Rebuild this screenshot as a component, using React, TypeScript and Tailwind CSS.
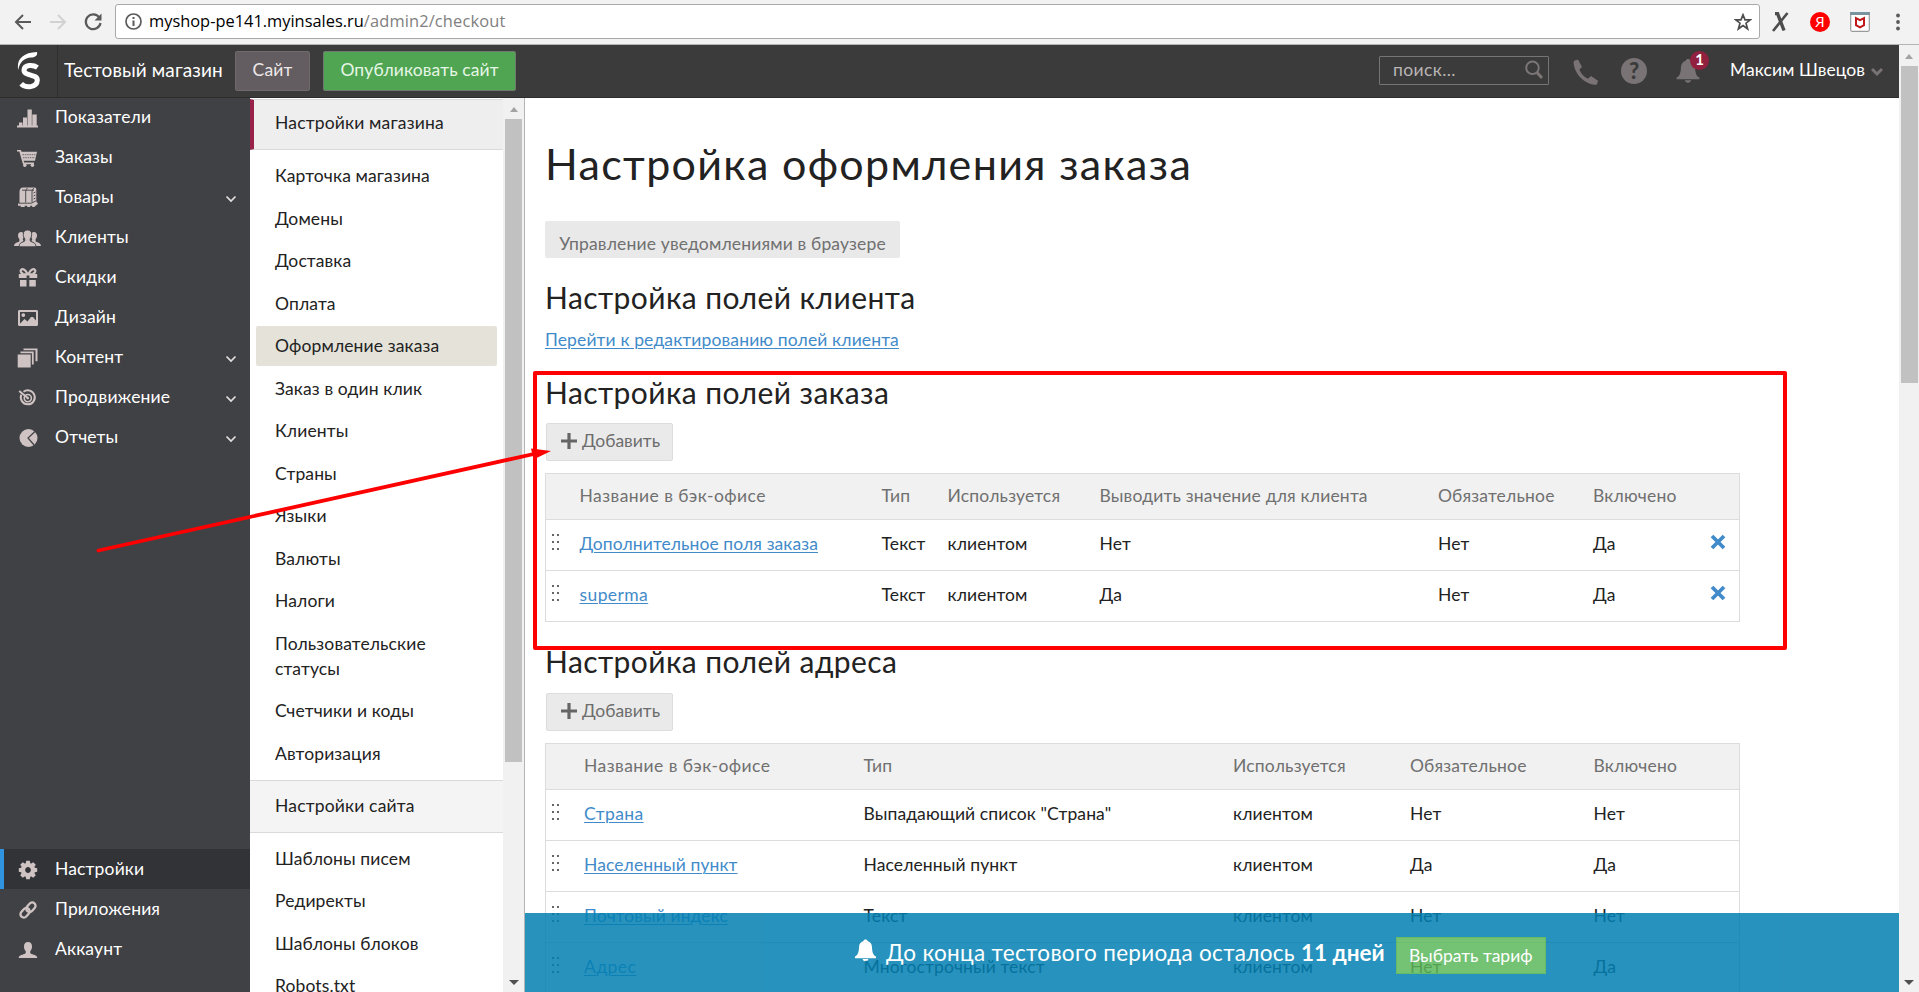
import type { ReactNode } from 'react';
import clsx from 'clsx';

const iconColor = '#cfc3c3';

function Ico({ children }: { children: ReactNode }) {
  return (
    <svg className="block h-[24px] w-[28px] shrink-0" viewBox="0 0 28 24" fill={iconColor} stroke="none">
      {children}
    </svg>
  );
}

const icons: Record<string, ReactNode> = {
  stats: (
    <Ico>
      <path d="M3 19.500h21v2H3zM5 16.500h3.500v3H5zM9 11.500h4v8H9zM13.500 3.500h4.300v16h-4.300zM18.300 8.500h4.400v11h-4.400z" />
    </Ico>
  ),
  cart: (
    <Ico>
      <path d="M3 4h3.800l.8 1.800H23l-2 9H9.600l.6 1.700H20v1.700H9L5.300 5.600H3z" />
      <circle cx="10.800" cy="19.300" r="1.700" />
      <circle cx="18.400" cy="19.300" r="1.700" />
      <path d="M8.500 8.700h13M9 11.700h12" stroke="#404145" strokeWidth=".7" strokeDasharray="1.500 .8" />
    </Ico>
  ),
  goods: (
    <Ico>
      <path d="M9 1.500h11.500c1.500 0 1.800.8 1.800 2.500v11.500l1.700 2.200-3.800 3.300h-2v-1.200h-2V21h-3v-1.200h-2.500V21h-4v-1.200H4V17.500h1.500V6C5.500 3.500 6.500 1.500 9 1.500z" />
      <path d="M13.500 2c-1.500 1.300-1.800 2.500-1.800 4v10.500M20 2c-1.500 1.300-2 2.500-2 4v10.500M5 17.200h12.500l4.500-2.400M19.500 7l2-1M19.500 10l2-1M19.500 13l2-1M8 4.200h12" stroke="#404145" strokeWidth=".9" fill="none" />
    </Ico>
  ),
  clients: (
    <Ico>
      <path d="M7 6c1.900 0 3 1.300 3 3.400 0 1.500-.5 2.500-1.200 3.300 0 1.500.5 2 .9 2.200L6 18.500 5.500 20H0c.2-2.500 1.500-3 5-4.300.5-.3.500-1.500.3-3C4.500 12 4 11 4 9.400 4 7.300 5.200 6 7 6z" />
      <path d="M20 6c-1.900 0-3 1.300-3 3.400 0 1.500.5 2.500 1.200 3.300 0 1.500-.5 2-.9 2.200l3.700 3.600.5 1.500H27c-.2-2.500-1.500-3-5-4.300-.5-.3-.5-1.500-.3-3 .8-.7 1.300-1.700 1.300-3.300C23 7.300 21.800 6 20 6z" />
      <path d="M13.500 4c2.700 0 4.200 1.700 4.200 4.300 0 2-.6 3.500-1.500 4.500-.1 1.500 0 2.300.6 2.600 3.700 1.400 5 2 5.200 5.400H5c.2-3.400 1.500-4 5.200-5.400.6-.3.700-1.100.6-2.600-.9-1-1.500-2.500-1.500-4.500C9.300 5.700 10.800 4 13.500 4z" stroke="#404145" strokeWidth=".9" />
    </Ico>
  ),
  gift: (
    <Ico>
      <path d="M4.800 8h4l1.200-.8h8l1.200.8h4v4h-7.800V9.500h-2.800V12H4.800zM6 14h6.500v6.500H6zM15.300 14h6.500v6.500h-6.500z" />
      <path d="M13.500 8C11 3 8.500 2.500 7 4c-1 1.200 0 3.200 2.500 4M14.500 8C17 3 19.500 2.500 21 4c1 1.200 0 3.200-2.500 4" fill="none" stroke={iconColor} strokeWidth="2.200" />
    </Ico>
  ),
  image: (
    <Ico>
      <path fillRule="evenodd" d="M5.500 4h17c.9 0 1.500.6 1.500 1.500v13c0 .9-.6 1.500-1.500 1.500h-17c-.9 0-1.500-.6-1.500-1.500v-13C4 4.600 4.600 4 5.500 4zM6 6v11.700l4.500-4.700 3 2.500 3.500-4.500 2 .1 3 3.400V6z" />
      <circle cx="9.300" cy="9.100" r="1.900" />
    </Ico>
  ),
  layers: (
    <Ico>
      <path d="M3.700 8.500h13v13h-13zM6.500 5.500h13.200v13h-1.800V7.200H6.500zM9.500 2.500H23.500v12.800h-2V4.200h-12z" />
    </Ico>
  ),
  target: (
    <Ico>
      <g fill="none" stroke={iconColor}>
        <path d="M9.500 5.800A7 7 0 1 1 7.300 8.700" strokeWidth="2" />
        <circle cx="13.800" cy="12.100" r="3.600" strokeWidth="1.600" />
        <path d="M5.200 4.900l8.600 7.200" strokeWidth="2" />
      </g>
      <circle cx="13.800" cy="12.100" r="1.300" />
    </Ico>
  ),
  pie: (
    <Ico>
      <circle cx="14.500" cy="12" r="9" />
      <path d="M21.500 5l-7.500 7 6.500 7.500" fill="none" stroke="#404145" strokeWidth="1.200" />
    </Ico>
  ),
  gear: (
    <Ico>
      <g transform="translate(14 12)">
        <circle r="5" fill="none" stroke={iconColor} strokeWidth="4.200" />
        {[0, 45, 90, 135].map((a) => (
          <path key={a} transform={`rotate(${a})`} d="M-1.800-9.200h3.600l.6 3.200h-4.800zM-1.800 9.200h3.600L2.400 6h-4.800z" />
        ))}
      </g>
    </Ico>
  ),
  link: (
    <Ico>
      <g fill="none" stroke={iconColor} strokeWidth="2.300" transform="translate(14 12) rotate(-48)">
        <rect x="-9.300" y="-3.600" width="10.600" height="6.600" rx="3.300" />
        <rect x="-1.300" y="-3" width="10.600" height="6.600" rx="3.300" />
      </g>
    </Ico>
  ),
  user: (
    <Ico>
      <path d="M14 4c2.700 0 4 1.600 4 4.400 0 2.200-.7 3.700-1.700 4.700-.2 1.600 0 2.400.7 2.700 4.300 1.400 6 1.700 6.300 4.200H4.700c.3-2.500 2-2.800 6.300-4.200.7-.3.900-1.100.7-2.700-1-1-1.700-2.500-1.700-4.700C10 5.600 11.300 4 14 4z" />
    </Ico>
  ),
};

const BellPath = () => (
  <path d="M12 1c1.200 0 2 .6 2.200 1.700 3 .9 4.500 3.200 4.600 6.600.1 4.600 1.200 8.200 4.200 9.500v1.700H1v-1.700c3-1.300 4.100-4.900 4.200-9.500.1-3.400 1.600-5.700 4.600-6.600C10 1.600 10.800 1 12 1zM9 21.500h6c-.3 1.500-1.400 2.300-3 2.300s-2.700-.8-3-2.300z" />
);

type NavRow = { icon: string; label: string; open?: boolean; active?: boolean };

const topNav: NavRow[] = [
  { icon: 'stats', label: 'Показатели' },
  { icon: 'cart', label: 'Заказы' },
  { icon: 'goods', label: 'Товары', open: true },
  { icon: 'clients', label: 'Клиенты' },
  { icon: 'gift', label: 'Скидки' },
  { icon: 'image', label: 'Дизайн' },
  { icon: 'layers', label: 'Контент', open: true },
  { icon: 'target', label: 'Продвижение', open: true },
  { icon: 'pie', label: 'Отчеты', open: true },
];
const bottomNav: NavRow[] = [
  { icon: 'gear', label: 'Настройки', active: true },
  { icon: 'link', label: 'Приложения' },
  { icon: 'user', label: 'Аккаунт' },
];

function NavItem({ icon, label, open, active }: NavRow) {
  return (
    <li
      className={clsx(
        'flex h-10 items-center border-l-4 pr-[13px] pl-[10px]',
        active ? 'border-[#2f93df] bg-[#323337]' : 'border-transparent',
      )}
    >
      <span className="mt-0.5">{icons[icon]}</span>
      <span className="ml-[13px] flex-1 text-[17.5px] leading-10 tracking-[0.15px] text-white">{label}</span>
      {open && (
        <svg className="mt-1 h-2.5 w-3" viewBox="0 0 12 10" fill="none" stroke="#e4e0e0" strokeWidth="1.700">
          <path d="M1.500 2.500L6 7l4.500-4.500" />
        </svg>
      )}
    </li>
  );
}

const shopMenu = ['Карточка магазина', 'Домены', 'Доставка', 'Оплата', 'Оформление заказа', 'Заказ в один клик', 'Клиенты', 'Страны', 'Языки', 'Валюты', 'Налоги', 'Пользовательские статусы', 'Счетчики и коды', 'Авторизация'];
const siteMenu = ['Шаблоны писем', 'Редиректы', 'Шаблоны блоков', 'Robots.txt'];

function SubMenu({ items }: { items: string[] }) {
  return (
    <ul className="flex flex-col gap-[2.5px] px-1.5">
      {items.map((t) => (
        <li
          key={t}
          className={clsx(
            'rounded-[2px] pt-[7px] pr-10 pb-2 pl-[19px] text-[17.5px] leading-[25px] tracking-[0.12px]',
            t === 'Оформление заказа' && 'bg-[#e4e2d9]',
          )}
        >
          {t}
        </li>
      ))}
    </ul>
  );
}

function H2({ children }: { children: ReactNode }) {
  return <h2 className="text-[30px] leading-9 tracking-[0.42px]">{children}</h2>;
}

function AddButton() {
  return (
    <button className="ml-px flex h-[38px] w-[127px] items-start rounded-[2px] border border-[#dcdcdc] bg-[#eaeaea] pl-[14px] text-[17.5px] leading-[34px] text-[#6d6d6d]">
      <svg className="mt-[9px] mr-[5px] h-4 w-4" viewBox="0 0 16 16" fill="#666">
        <path d="M6.400 0h3.200v6.400H16v3H9.600V16H6.400V9.400H0v-3h6.400z" />
      </svg>
      Добавить
    </button>
  );
}

function Handle() {
  return (
    <svg className="mt-[13px] ml-[6px] h-[17px] w-2" viewBox="0 0 8 17" fill="#666">
      {[1, 8, 15].map((y) => (
        <path key={y} d={`M0 ${y}h2v2H0zM5 ${y}h2v2H5z`} />
      ))}
    </svg>
  );
}

const Cross = () => (
  <svg className="mt-[14px] -ml-px h-4 w-4" viewBox="0 0 16 16" fill="none" stroke="#428bca" strokeWidth="3.800">
    <path d="M2 2l12 12M14 2L2 14" />
  </svg>
);

function Table({ cols, head, rows, removable }: { cols: string; head: string[]; rows: string[][]; removable?: boolean }) {
  return (
    <div className="mt-3 w-[1195px] border-x border-t border-[#dcdcdc]">
      <div className={clsx('grid h-[46px] border-b border-[#dcdcdc] bg-[#f1f1f1] text-[17.5px] leading-[43px] text-[#707070]', cols)}>
        <span />
        {head.map((h, i) => (
          <span key={h} className={i === 0 ? 'tracking-[0.45px]' : 'tracking-[0.18px]'}>
            {h}
          </span>
        ))}
      </div>
      {rows.map((r) => (
        <div key={r[0]} className={clsx('grid h-[51px] border-b border-[#dcdcdc] text-[17.5px] leading-[48px]', cols)}>
          <Handle />
          {r.map((c, i) =>
            i === 0 ? (
              <a key={i} className={clsx('text-[#428bca] underline decoration-1 underline-offset-[2px]', c.length < 8 ? 'tracking-[0.4px]' : 'tracking-[0.08px]')}>
                {c}
              </a>
            ) : (
              <span key={i} className="tracking-[0.1px]">
                {c}
              </span>
            ),
          )}
          {removable && <Cross />}
        </div>
      ))}
    </div>
  );
}

const Up = () => <span className="h-0 w-0 border-x-[4px] border-b-[5px] border-x-transparent border-b-[#a3a3a3]" />;
const Down = () => <span className="h-0 w-0 border-x-[5px] border-t-[5px] border-x-transparent border-t-[#505050]" />;

function BrowserBar() {
  return (
    <div className="flex h-[45px] shrink-0 items-start border-b border-[#b4b4b4] bg-[#f2f2f2]">
      <div className="flex h-11 w-[115px] shrink-0 items-center pl-[14px]">
        <svg className="h-5 w-[18px]" viewBox="0 0 18 20" fill="none" stroke="#5a5a5a" strokeWidth="2">
          <path d="M17 10H2.500M9 3L2 10l7 7" />
        </svg>
        <svg className="ml-[17px] h-5 w-[18px]" viewBox="0 0 18 20" fill="none" stroke="#d2d2d2" strokeWidth="2">
          <path d="M1 10h14.500M9 3l7 7-7 7" />
        </svg>
        <svg className="ml-[17px] h-5 w-[18px]" viewBox="0 0 18 20" fill="none" stroke="#5a5a5a" strokeWidth="2.200">
          <path d="M15.300 5.500A7.400 7.400 0 1 0 16.500 11" />
          <path d="M17.500 1.500v7h-7z" fill="#5a5a5a" stroke="none" />
        </svg>
      </div>
      <div className="mt-1 flex h-[35px] w-[1645px] items-center rounded-[3px] border border-[#a9a9a9] bg-white pr-[7px] pl-[9px] font-['Open_Sans',sans-serif] text-[16.4px]">
        <svg className="h-[17px] w-[17px]" viewBox="0 0 17 17" fill="none" stroke="#5a5a5a">
          <circle cx="8.500" cy="8.500" r="7.500" strokeWidth="1.700" />
          <path d="M8.500 7.500V13M8.500 4v2" strokeWidth="2" />
        </svg>
        <span className="ml-[7px] text-black">myshop-pe141.myinsales.ru</span>
        <span className="flex-1 tracking-[0.15px] text-[#808080]">/admin2/checkout</span>
        <svg className="h-[18px] w-[18px]" viewBox="0 0 18 18" fill="none" stroke="#4d4d4d" strokeWidth="1.700">
          <path d="M9 1.800l2 5h5.200l-4.200 3.400 1.600 5.600L9 12.500l-4.600 3.300L6 10.200 1.800 6.800H7z" />
        </svg>
      </div>
      <div className="flex h-11 flex-1 items-center pl-[11px]">
        <svg className="h-5 w-[18px]" viewBox="0 0 18 20" fill="none" stroke="#4c4c4c">
          <path d="M4 1.500h2.500L13 18.500" strokeWidth="3.400" />
          <path d="M16.500 1L2 19" strokeWidth="2.600" />
        </svg>
        <span className="ml-[21px] flex h-5 w-5 items-center justify-center rounded-full bg-[#f00] text-[14px] leading-5 text-white">Я</span>
        <svg className="ml-5 h-5 w-5" viewBox="0 0 20 20">
          <rect x=".7" y=".7" width="18.600" height="18.600" rx="1.500" fill="#fff" stroke="#999" strokeWidth="1.200" />
          <path d="M0 0h20v3H0z" fill="#7a949f" />
          <path d="M6 6.200l4 2 4-2v7L10 15.300 6 13.200z" fill="none" stroke="#c01818" strokeWidth="2" />
        </svg>
        <svg className="ml-[26px] h-[18px] w-1" viewBox="0 0 4 18" fill="#5a5a5a">
          <circle cx="2" cy="2.500" r="1.900" />
          <circle cx="2" cy="9" r="1.900" />
          <circle cx="2" cy="15.500" r="1.900" />
        </svg>
      </div>
    </div>
  );
}

function Header() {
  return (
    <header className="flex h-[53px] shrink-0 items-start border-b border-[#2c2c2c] bg-[#3b3b3b] text-[17.5px]">
      <div className="h-[52px] w-[58px] shrink-0 border-r border-[#2f2f2f] pt-[7px] pl-[17px]">
        <svg className="h-[38px] w-6" viewBox="0 0 24 38">
          <path d="M1.200 18C-.6 8 5 .6 20 0c.8 3.500-1.500 5.300-6 5.600C7.500 6.200 2.800 9.500 1.200 18z" fill="#fff" />
          <path d="M20.500 15.500C16 12.500 7.500 12.500 7 18c-.4 6.500 13.600 3.600 13.300 10.200C20 36 8.500 36.300 4.200 31.800" fill="none" stroke="#fff" strokeWidth="5" />
        </svg>
      </div>
      <span className="w-[177px] pl-1.5 text-[19px] leading-[50px] tracking-[0.1px] text-white">Тестовый магазин</span>
      <button className="mt-1.5 h-10 w-[75px] rounded-[2px] border border-[#6f696b] bg-[#635c60] pb-[3px] leading-[34px] tracking-[0.15px] text-[#ece8e8]">Сайт</button>
      <button className="mt-1.5 ml-[13px] h-10 w-[193px] rounded-[2px] border border-[#6f7a6f] bg-[#4fa551] pb-[3px] leading-[34px] tracking-[0.1px] text-[#e6f6e6]">Опубликовать сайт</button>
      <span className="flex-1" />
      <div className="mt-[11px] flex h-[29px] w-[170px] rounded-[1px] border border-[#757575] pl-[13px] text-[#b9b4b4]">
        <span className="flex-1 leading-[26px] tracking-[0.4px]">поиск...</span>
        <svg className="mt-[3px] mr-1 h-5 w-5" viewBox="0 0 20 20" fill="none" stroke="#7c7676">
          <circle cx="8.500" cy="7.800" r="6.300" strokeWidth="2" />
          <path d="M13 12.500l5 5.500" strokeWidth="3" />
        </svg>
      </div>
      <svg className="mt-3.5 ml-6 h-[26px] w-[26px]" viewBox="0 0 26 26" fill="#7a7375">
        <path d="M1.200 1.800L5 .5l4 7.500-2.600 2.400c1.400 4.200 4.600 7.400 8.600 9.400l3-2.700 7 4.600-1 3.500c-1 .8-4 .6-6.500-.2C8.500 22 1.500 13 .7 5 .6 3.500.7 2.500 1.200 1.800z" />
      </svg>
      <span className="mt-[13px] ml-[22px] flex h-[26px] w-[26px] items-center justify-center rounded-full bg-[#7a7375] text-[22px] leading-[26px] font-black text-[#3b3b3b]">?</span>
      <span className="relative mt-[13px] ml-[28px]">
        <svg className="h-[26px] w-[26px]" viewBox="0 0 24 25" fill="#7a7375">
          <BellPath />
        </svg>
        <span className="absolute -top-[7px] left-[15px] flex h-[19px] w-[19px] items-start justify-center rounded-full bg-[#92203f] text-[15px] leading-[17px] font-bold text-white">1</span>
      </span>
      <span className="ml-[29px] leading-[50px] tracking-[0.05px] whitespace-nowrap text-white">Максим Швецов</span>
      <svg className="mt-[22px] mr-4 ml-1.5 h-2.5 w-3" viewBox="0 0 12 10" fill="none" stroke="#7a7375" strokeWidth="3">
        <path d="M1 2l5 5 5-5" />
      </svg>
    </header>
  );
}

export default function App() {
  return (
    <div className="relative flex h-[992px] w-[1919px] flex-col overflow-hidden bg-white font-['Lato','Open_Sans',sans-serif] text-[#222]">
      <BrowserBar />
      <div className="flex min-h-0 flex-1">
        <div className="flex min-w-0 flex-1 flex-col">
          <Header />
          <div className="flex min-h-0 flex-1">
            <nav className="flex w-[250px] shrink-0 flex-col justify-between bg-[#404145] pb-[23px]">
              <ul className="-mt-px">
                {topNav.map((n) => (
                  <NavItem key={n.label} {...n} />
                ))}
              </ul>
              <ul>
                {bottomNav.map((n) => (
                  <NavItem key={n.label} {...n} />
                ))}
              </ul>
            </nav>

            <aside className="flex w-[275px] shrink-0 overflow-hidden border-r border-[#b5b5b5]">
              <div className="w-[253px] shrink-0 pt-px">
                <div className="mb-1.5 h-[51px] border-y border-l-4 border-y-[#dadada] border-l-[#98224a] bg-[#eeeeee] pl-[21px] text-[17.5px] leading-[46px] tracking-[0.17px]">Настройки магазина</div>
                <SubMenu items={shopMenu} />
                <div className="mt-[6px] mb-1.5 h-[53px] border-y border-[#dadada] bg-[#f4f4f4] pl-[25px] text-[17.5px] leading-[50px] tracking-[0.17px]">Настройки сайта</div>
                <SubMenu items={siteMenu} />
              </div>
              <div className="flex flex-1 flex-col items-center justify-between bg-[#f1f1f1] pt-[9px] pb-[7px]">
                <div className="flex flex-col items-center">
                  <Up />
                  <div className="mt-[7px] h-[643px] w-[17px] bg-[#c1c1c1]" />
                </div>
                <Down />
              </div>
            </aside>

            <main className="relative min-w-0 flex-1 overflow-hidden pt-[41px] pl-5">
              <h1 className="text-[43px] leading-[50px] tracking-[1.33px]">Настройка оформления заказа</h1>
              <div className="mt-8 h-[37px] w-[355px] rounded-[2px] bg-[#e9e9e9] pt-2 text-center text-[17.5px] leading-[30px] tracking-[0.15px] text-[#707070]">
                Управление уведомлениями в браузере
              </div>
              <div className="mt-[21px]">
                <H2>Настройка полей клиента</H2>
              </div>
              <div className="mt-3 text-[17.5px] leading-[26px] tracking-[0.13px]">
                <a className="text-[#428bca] underline decoration-1 underline-offset-[2px]">Перейти к редактированию полей клиента</a>
              </div>
              <div className="mt-[21px] mb-[13px]">
                <H2>Настройка полей заказа</H2>
              </div>
              <AddButton />
              <Table
                cols="grid-cols-[33.5px_302px_66px_152px_338.5px_155px_118px_1fr]"
                head={['Название в бэк-офисе', 'Тип', 'Используется', 'Выводить значение для клиента', 'Обязательное', 'Включено']}
                rows={[
                  ['Дополнительное поля заказа', 'Текст', 'клиентом', 'Нет', 'Нет', 'Да'],
                  ['superma', 'Текст', 'клиентом', 'Да', 'Нет', 'Да'],
                ]}
                removable
              />
              <div className="mt-[21px] mb-3.5">
                <H2>Настройка полей адреса</H2>
              </div>
              <AddButton />
              <Table
                cols="grid-cols-[38px_279.5px_369.5px_177px_183.5px_1fr]"
                head={['Название в бэк-офисе', 'Тип', 'Используется', 'Обязательное', 'Включено']}
                rows={[
                  ['Страна', 'Выпадающий список "Страна"', 'клиентом', 'Нет', 'Нет'],
                  ['Населенный пункт', 'Населенный пункт', 'клиентом', 'Да', 'Да'],
                  ['Почтовый индекс', 'Текст', 'клиентом', 'Нет', 'Нет'],
                  ['Адрес', 'Многострочный текст', 'клиентом', 'Нет', 'Да'],
                ]}
              />
              <div className="absolute inset-x-0 bottom-0 flex h-[79px] items-start overflow-hidden bg-[#027fb2] pl-[329px] text-[22.5px] leading-[79px] whitespace-nowrap text-white opacity-85">
                <svg className="mt-[25px] mr-[9px] h-[25px] w-[23px]" viewBox="0 0 24 25" fill="#fff">
                  <BellPath />
                </svg>
                <span className="tracking-[0.32px]">До конца тестового периода осталось</span>
                <b className="ml-[6px]">11 дней</b>
                <button className="mt-6 ml-[11px] h-[37px] w-[150px] border border-[#4cae4c] bg-[#5cb85c] text-[17.5px] leading-[34px]">Выбрать тариф</button>
              </div>
            </main>
          </div>
        </div>
        <div className="flex w-5 shrink-0 flex-col items-center justify-between bg-[#f1f1f1] pt-[9px] pb-[7px]">
          <div className="flex flex-col items-center">
            <Up />
            <div className="mt-[7px] h-[317px] w-[17px] bg-[#c1c1c1]" />
          </div>
          <Down />
        </div>
      </div>

      <div className="pointer-events-none absolute top-[370.5px] left-[533px] h-[279px] w-[1254px] rounded-[2px] border-4 border-[#f00]" />
      <svg className="pointer-events-none absolute top-[440px] left-[90px] h-[120px] w-[470px]" viewBox="90 440 470 120">
        <path d="M98.500 550.500L536 453.500" stroke="#f00" strokeWidth="3.800" strokeLinecap="round" />
        <path d="M531 448.500l20 2.500-17.500 8.500z" fill="#f00" />
      </svg>
    </div>
  );
}
